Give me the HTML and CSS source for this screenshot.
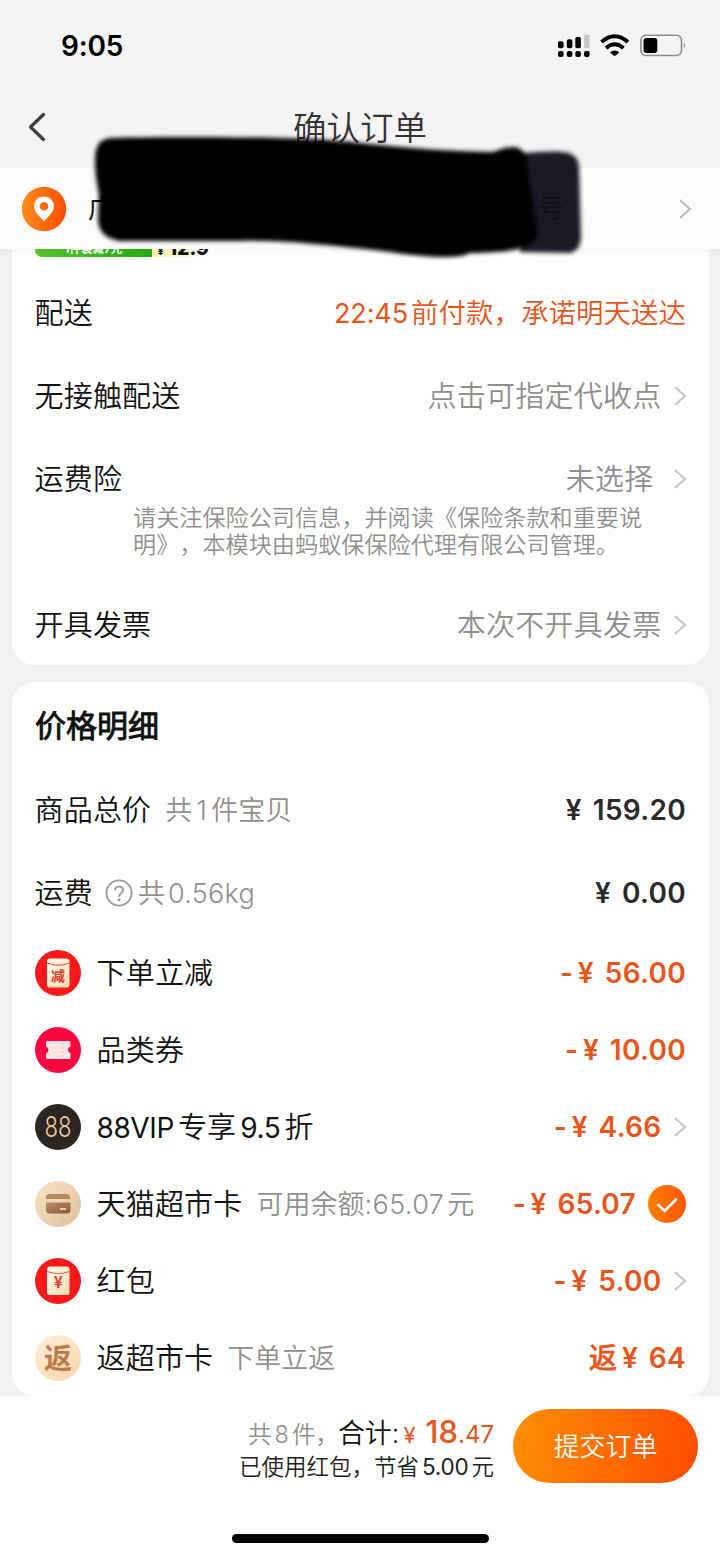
FILE: index.html
```html
<!DOCTYPE html>
<html lang="zh-CN">
<head>
<meta charset="utf-8">
<title>确认订单</title>
<link rel="stylesheet" href="styles.css">
</head>
<body>
<svg width="0" height="0" class="defs">
  <defs>
    <symbol id="chev" viewBox="0 0 14 22"><path d="M2 2l10 9-10 9" fill="none" stroke="currentColor" stroke-width="2.1"/></symbol>
    <linearGradient id="orange" x1="0" y1="0" x2="1" y2="0"><stop offset="0" stop-color="#ff8c1e"/><stop offset="1" stop-color="#ff4d00"/></linearGradient>
    <linearGradient id="orange2" x1="0" y1="0" x2="1" y2="0"><stop offset="0" stop-color="#ff8000"/><stop offset="1" stop-color="#ff5500"/></linearGradient>
    <linearGradient id="cream" x1="0" y1="0" x2="1" y2="1"><stop offset="0" stop-color="#fffaf0"/><stop offset="1" stop-color="#ffdcae"/></linearGradient>
    <linearGradient id="sand" x1="0" y1="0" x2="1" y2="1"><stop offset="0" stop-color="#f8e4c8"/><stop offset="1" stop-color="#dfc09a"/></linearGradient>
    <linearGradient id="peach" x1="0" y1="0" x2="1" y2="1"><stop offset="0" stop-color="#ffeed8"/><stop offset="1" stop-color="#fbd5aa"/></linearGradient>
    <linearGradient id="brown" x1="0" y1="0" x2="1" y2="1"><stop offset="0" stop-color="#c09068"/><stop offset="1" stop-color="#875538"/></linearGradient>
  </defs>
</svg>
<div class="screen">
  <header class="status">
    <span class="clock">9:05</span>
    <svg class="status-icons" width="130" height="26" viewBox="0 0 130 26">
      <g fill="#000">
        <rect x="2" y="9.200" width="5.600" height="7" rx="1.800"/><rect x="10.800" y="7.300" width="5.600" height="8.900" rx="1.800"/><rect x="19.300" y="5" width="5.600" height="11.200" rx="1.800"/>
        <rect x="28" y="2.500" width="5.600" height="13.700" rx="1.800" fill="#c8c8c8"/>
        <rect x="2" y="19" width="5.600" height="6" rx="2"/><rect x="10.800" y="19" width="5.600" height="6" rx="2"/><rect x="19.300" y="19" width="5.600" height="6" rx="2"/><rect x="28" y="19" width="5.600" height="6" rx="2"/>
        <path d="M54 20.400q4.700-3.600 9.400 0L58.700 24.200z"/>
      </g>
      <g fill="none" stroke="#000" stroke-width="4"><path d="M45.500 10q13.200-11.500 26.400 0"/><path d="M50 15.900q8.700-7.400 17.400 0"/></g>
      <rect x="84.900" y="3.300" width="40.600" height="20.200" rx="5" fill="none" stroke="#8d8d8d" stroke-width="1.600"/>
      <rect x="87.500" y="6" width="13.800" height="15" rx="3"/>
      <path d="M127.800 10.500q2.600 2.800 0 5.800z" fill="#8d8d8d"/>
    </svg>
  </header>
  <nav class="nav">
    <svg class="back" width="20" height="32" viewBox="0 0 20 32"><path d="M17.500 3.500L4.500 16l13 12.500" fill="none" stroke="#3c3c3c" stroke-width="3.200" stroke-linecap="round" stroke-linejoin="round"/></svg>
    <h1>确认订单</h1>
  </nav>
  <section class="address">
    <svg width="46" height="46" viewBox="0 0 46 46"><circle cx="23" cy="23" r="22.200" fill="url(#orange)"/><path fill-rule="evenodd" d="M23 10.600c-5.700 0-9.900 4.200-9.900 9.500 0 5.800 5 10.300 9.900 15.300 4.900-5 9.900-9.500 9.900-15.300 0-5.300-4.200-9.500-9.900-9.500zm0 5.400a4.300 4.300 0 1 1 0 8.600 4.300 4.300 0 0 1 0-8.600z" fill="#fff"/></svg>
    <div class="street"><span>广</span><span>号</span></div>
    <svg class="chev big"><use href="#chev"/></svg>
    <svg class="scribble" width="540" height="150" viewBox="80 120 540 150">
      <path class="ink-soft" d="M520 154C540 151 560 151 569 153Q578 156 579 166L581 238Q580 251 570 253L520 252Z"/>
      <path class="ink" d="M96 150Q99 139 110 138C180 136 260 137 310 139S400 150 492 152C500 150 504 147 514 147Q524 148 526 158L538 236C530 252 500 252 470 253C460 259 430 258 390 252C330 245 280 240 240 241L120 241Q98 238 98 218L99 195Q93 165 96 150Z"/>
    </svg>
  </section>
  <main>
    <section class="card first">
      <div class="promo"><span class="deal">1件装减7元</span><span class="price"><small>¥</small>12.9</span></div>
      <div class="row"><span class="label">配送</span><span class="promise"><span class="time">22:45</span>前付款，承诺明天送达</span></div>
      <div class="row"><span class="label">无接触配送</span><span class="value">点击可指定代收点</span><svg class="chev"><use href="#chev"/></svg></div>
      <div class="row"><span class="label">运费险</span><span class="value wide">未选择</span><svg class="chev"><use href="#chev"/></svg></div>
      <p class="note">请关注保险公司信息，并阅读《保险条款和重要说<br>明》，本模块由蚂蚁保保险代理有限公司管理。</p>
      <div class="row"><span class="label">开具发票</span><span class="value">本次不开具发票</span><svg class="chev"><use href="#chev"/></svg></div>
    </section>
    <section class="card">
      <h2>价格明细</h2>
      <div class="row"><span class="label">商品总价</span><span class="hint">共<i class="one">1</i>件宝贝</span><b class="sum"><span class="yen">¥</span> 159.20</b></div>
      <div class="row"><span class="label">运费</span><svg class="help" width="28" height="28" viewBox="0 0 28 28" fill="none" stroke="#999" stroke-width="1.800"><circle cx="14" cy="14" r="12.600"/><path d="M10 11.500c0-5.300 8-5.300 8 0 0 2.700-4 3-4 6.300"/><circle cx="14" cy="20.800" r=".6"/></svg><span class="hint kg">共<i>0.56kg</i></span><b class="sum"><span class="yen">¥</span> 0.00</b></div>
      <div class="row cut">
        <svg class="ico" viewBox="0 0 46 46"><circle cx="23" cy="23" r="23" fill="#f9191b"/><rect x="12" y="8.500" width="22.500" height="29" rx="2.800" fill="url(#cream)"/><path d="M12 13q11 4.500 22.500 0" fill="none" stroke="#e0483a" stroke-width="1"/><text x="23" y="30.500" text-anchor="middle" class="t-cut">减</text></svg>
        <span class="label">下单立减</span><b class="sum">-<span class="yen">¥</span> 56.00</b></div>
      <div class="row cut">
        <svg class="ico" viewBox="0 0 46 46"><circle cx="23" cy="23" r="23" fill="#fb0641"/><path d="M12.500 14h21.500q1.500 0 1.500 1.500v4a3.700 3.700 0 0 0 0 7v4q0 1.500-1.500 1.500H12.500q-1.500 0-1.500-1.500v-4a3.700 3.700 0 0 0 0-7v-4q0-1.500 1.500-1.500z" fill="#ffe6e4"/><path d="M28 16v14" stroke="#fbb" stroke-dasharray="2 2"/></svg>
        <span class="label">品类券</span><b class="sum">-<span class="yen">¥</span> 10.00</b></div>
      <div class="row cut">
        <svg class="ico" viewBox="0 0 46 46"><circle cx="23" cy="23" r="23" fill="#2d2520"/><text x="23" y="33" text-anchor="middle" class="t-88" textLength="27" lengthAdjust="spacingAndGlyphs">88</text></svg>
        <span class="label vip"><i>88VIP</i>专享<i class="off">9.5</i>折</span><b class="sum">-<span class="yen">¥</span> 4.66</b><svg class="chev"><use href="#chev"/></svg></div>
      <div class="row cut">
        <svg class="ico" viewBox="0 0 46 46"><circle cx="23" cy="23" r="23" fill="url(#sand)"/><path d="M11 18v-1.500q0-3.500 3.500-3.500h17q3.500 0 3.500 3.500V18z" fill="#b98a60"/><path d="M11 21.500h24.500V29q0 3.500-3.500 3.500H14.500Q11 32.500 11 29z" fill="url(#brown)"/><path d="M25 28h6" stroke="#f6dfc2" stroke-width="1.800"/></svg>
        <span class="label">天猫超市卡</span><span class="hint">可用余额<i class="bal">:65.07</i>元</span><b class="sum">-<span class="yen">¥</span> 65.07</b>
        <svg class="check" width="38" height="38" viewBox="0 0 38 38"><circle cx="19" cy="19" r="19" fill="url(#orange2)"/><path d="M10.500 20l6 6L28 14.500" fill="none" stroke="#fff" stroke-width="2.600" stroke-linecap="round" stroke-linejoin="round"/></svg></div>
      <div class="row cut">
        <svg class="ico" viewBox="0 0 46 46"><circle cx="23" cy="23" r="23" fill="#f9191b"/><rect x="12" y="8.500" width="22.500" height="28.500" rx="2.800" fill="url(#cream)"/><path d="M12 13.500q11 4 22.500 0" fill="none" stroke="#c85a40" stroke-width="1"/><text x="23.200" y="30" text-anchor="middle" class="t-yen">¥</text></svg>
        <span class="label">红包</span><b class="sum">-<span class="yen">¥</span> 5.00</b><svg class="chev"><use href="#chev"/></svg></div>
      <div class="row cut">
        <svg class="ico" viewBox="0 0 46 46"><circle cx="23" cy="23" r="23" fill="url(#peach)"/><text x="23" y="33.500" text-anchor="middle" class="t-back">返</text></svg>
        <span class="label">返超市卡</span><span class="hint">下单立返</span><b class="sum"><span class="fan">返</span><span class="yen">¥</span> 64</b></div>
    </section>
  </main>
  <footer>
    <div class="pay">
      <div class="totals">
        <div class="line1"><span class="count">共<i>8</i>件，</span><span class="tot">合计:</span><span class="amount"><small>¥</small><strong>18</strong>.47</span></div>
        <div class="line2">已使用红包，节省<i>5.00</i>元</div>
      </div>
      <button>提交订单</button>
    </div>
    <div class="home"></div>
  </footer>
</div>
</body>
</html>
```
FILE: styles.css
```css
* { box-sizing: border-box; }
body { margin: 0; background: #f1f1f1; font-family: Inter, "Noto Sans CJK SC", sans-serif; color: #111; text-spacing-trim: space-all; }
i { font-style: normal; }
.defs { position: absolute; }
.screen { width: 720px; height: 1558px; display: flex; flex-direction: column; overflow: hidden; }

.status { height: 90px; background: #f4f4f4; display: flex; justify-content: space-between; align-items: flex-start; padding: 32px 34px 0 61px; }
.clock { font-size: 28px; font-weight: 600; line-height: 29px; color: #000; letter-spacing: -.2px; }
.status-icons { width: 130px; height: 26px; }

.nav { height: 78px; background: #f4f4f4; display: grid; grid-template-columns: 60px 1fr 60px; align-items: center; }
.back { margin-left: 26px; margin-top: -4px; }
h1 { margin: 0 0 2px; text-align: center; font-size: 33.500px; font-weight: 350; line-height: 40px; color: #333; }

.address { position: relative; z-index: 1; height: 81px; background: #fbfbfb; display: flex; align-items: center; padding: 0 28px 0 21px; box-shadow: 0 3px 8px rgba(0,0,0,.04); flex: none; }
.street { display: flex; justify-content: space-between; width: 476px; margin-left: 21px; font-size: 26px; line-height: 40px; padding-top: 1px; }
.scribble { position: absolute; left: 80px; top: -48px; }
.ink { fill: #000; filter: blur(2.200px); }
.ink-soft { fill: #11111e; fill-opacity: .96; filter: blur(2px); }
.chev { width: 14px; height: 22px; color: #c4c4c4; flex: none; margin-left: 11.500px; margin-right: -1px; }
.chev.big { margin-left: auto; margin-right: 0; color: #bbb; }

main { display: flex; flex-direction: column; gap: 17px; padding: 0 11px 0 12px; }
.card { background: #fff; border-radius: 22px; padding: 0 23px; }
.first { border-radius: 0 0 22px 22px; height: 416px; }
.promo { height: 30px; margin-top: -22px; margin-bottom: 14.500px; width: 174px; display: flex; align-items: flex-end; border-radius: 7px; background: linear-gradient(90deg, #fff6b8 70%, #fff); }
.deal { width: 118px; height: 30px; text-align: center; background: linear-gradient(90deg, #5bc52c, #22ad12); color: #fff; font-size: 11.500px; font-weight: 700; line-height: 14px; padding-top: 14.500px; border-radius: 7px 0 0 7px; }
.price { font-size: 19.500px; font-weight: 800; line-height: 20px; color: #111; padding-left: 6px; height: 19px; white-space: nowrap; }
.price small { font-size: 10px; margin-right: 5px; }
.row { height: 83px; display: flex; align-items: center; line-height: 40px; white-space: nowrap; }
.label { font-size: 29px; font-weight: 350; letter-spacing: .2px; padding-top: 2px; margin-left: -.5px; }
.value { margin-left: auto; font-size: 29px; letter-spacing: .25px; color: #8f8f8f; font-weight: 350; padding-top: 2px; }
.value.wide { margin-right: 8px; }
.promise { margin-left: auto; font-size: 27.500px; font-weight: 350; color: #e8551c; padding-top: 1px; }
.time { font-weight: 400; letter-spacing: -.1px; margin-right: 3px; font-size: 27px; }
.note { margin: -16px 0 0 98px; font-size: 23.150px; line-height: 27px; height: 79px; color: #8f8f8f; white-space: nowrap; font-weight: 350; }

h2 { margin: 0; height: 86px; padding-top: 1px; line-height: 86px; font-size: 31px; font-weight: 400; -webkit-text-stroke: .9px #111; }
.hint { font-size: 27px; color: #8f8f8f; margin-left: 14px; font-weight: 350; padding-top: 2px; }
.hint i { margin: 0 3px; letter-spacing: .3px; }
.hint .one { margin: 0 4px; }
.hint .bal { margin: 0 3px 0 0; letter-spacing: .4px; }
.help { margin-left: 12px; }
.hint.kg { margin-left: 5px; }
.sum { margin-left: auto; font-size: 28px; font-weight: 600; color: #2b2b2b; letter-spacing: .3px; }
.cut { height: 77px; }
.cut .sum { color: #e8551c; }
.yen { margin: 0 3.500px 0 4.500px; }
.fan { font-weight: 400; -webkit-text-stroke: .9px #e8551c; }
.vip i { font-size: 28px; font-weight: 400; letter-spacing: -.4px; margin-right: 4px; }
.vip .off { margin: 0 4px; }
.ico { width: 46px; height: 46px; margin-right: 16.500px; margin-left: -.5px; flex: none; }
.check { margin-left: 12px; }
.t-cut { font-size: 14px; font-weight: 700; fill: #e0392b; }
.t-88 { font-size: 28px; font-weight: 300; fill: #efcfa6; }
.t-yen { font-size: 16px; font-weight: 600; fill: #e03a3a; }
.t-back { font-size: 28px; font-weight: 700; fill: #bd7c4d; }

footer { background: #fff; flex: 1; display: flex; flex-direction: column; align-items: center; justify-content: space-between; padding: 13px 0 15px; }
.pay { width: 100%; display: flex; justify-content: flex-end; padding-right: 22px; gap: 19px; }
.totals { display: flex; flex-direction: column; align-items: flex-end; white-space: nowrap; padding-top: 5px; }
.line1 { height: 36px; line-height: 36px; display: flex; align-items: baseline; }
.count { font-size: 23.500px; color: #8f8f8f; font-weight: 350; margin-right: -1px; }
.count i { margin: 0 3px; }
.tot { font-size: 27px; font-weight: 350; }
.amount { font-size: 24px; color: #e8551c; margin-left: 4px; }
.amount small { font-size: 22px; margin-right: 10px; }
.amount strong { font-size: 31px; font-weight: 450; }
.line2 { font-size: 22.500px; font-weight: 350; line-height: 34px; color: #222; }
.line2 i { margin: 0 3px; font-weight: 400; letter-spacing: -.2px; }
button { width: 185px; height: 74px; border: 0; border-radius: 37px; background: linear-gradient(100deg, #ff9000, #ff4a00); color: #fff; font: 350 26px/72px "Noto Sans CJK SC", sans-serif; padding: 0 0 2px; }
.home { width: 257px; height: 9px; border-radius: 5px; background: #000; }
```
